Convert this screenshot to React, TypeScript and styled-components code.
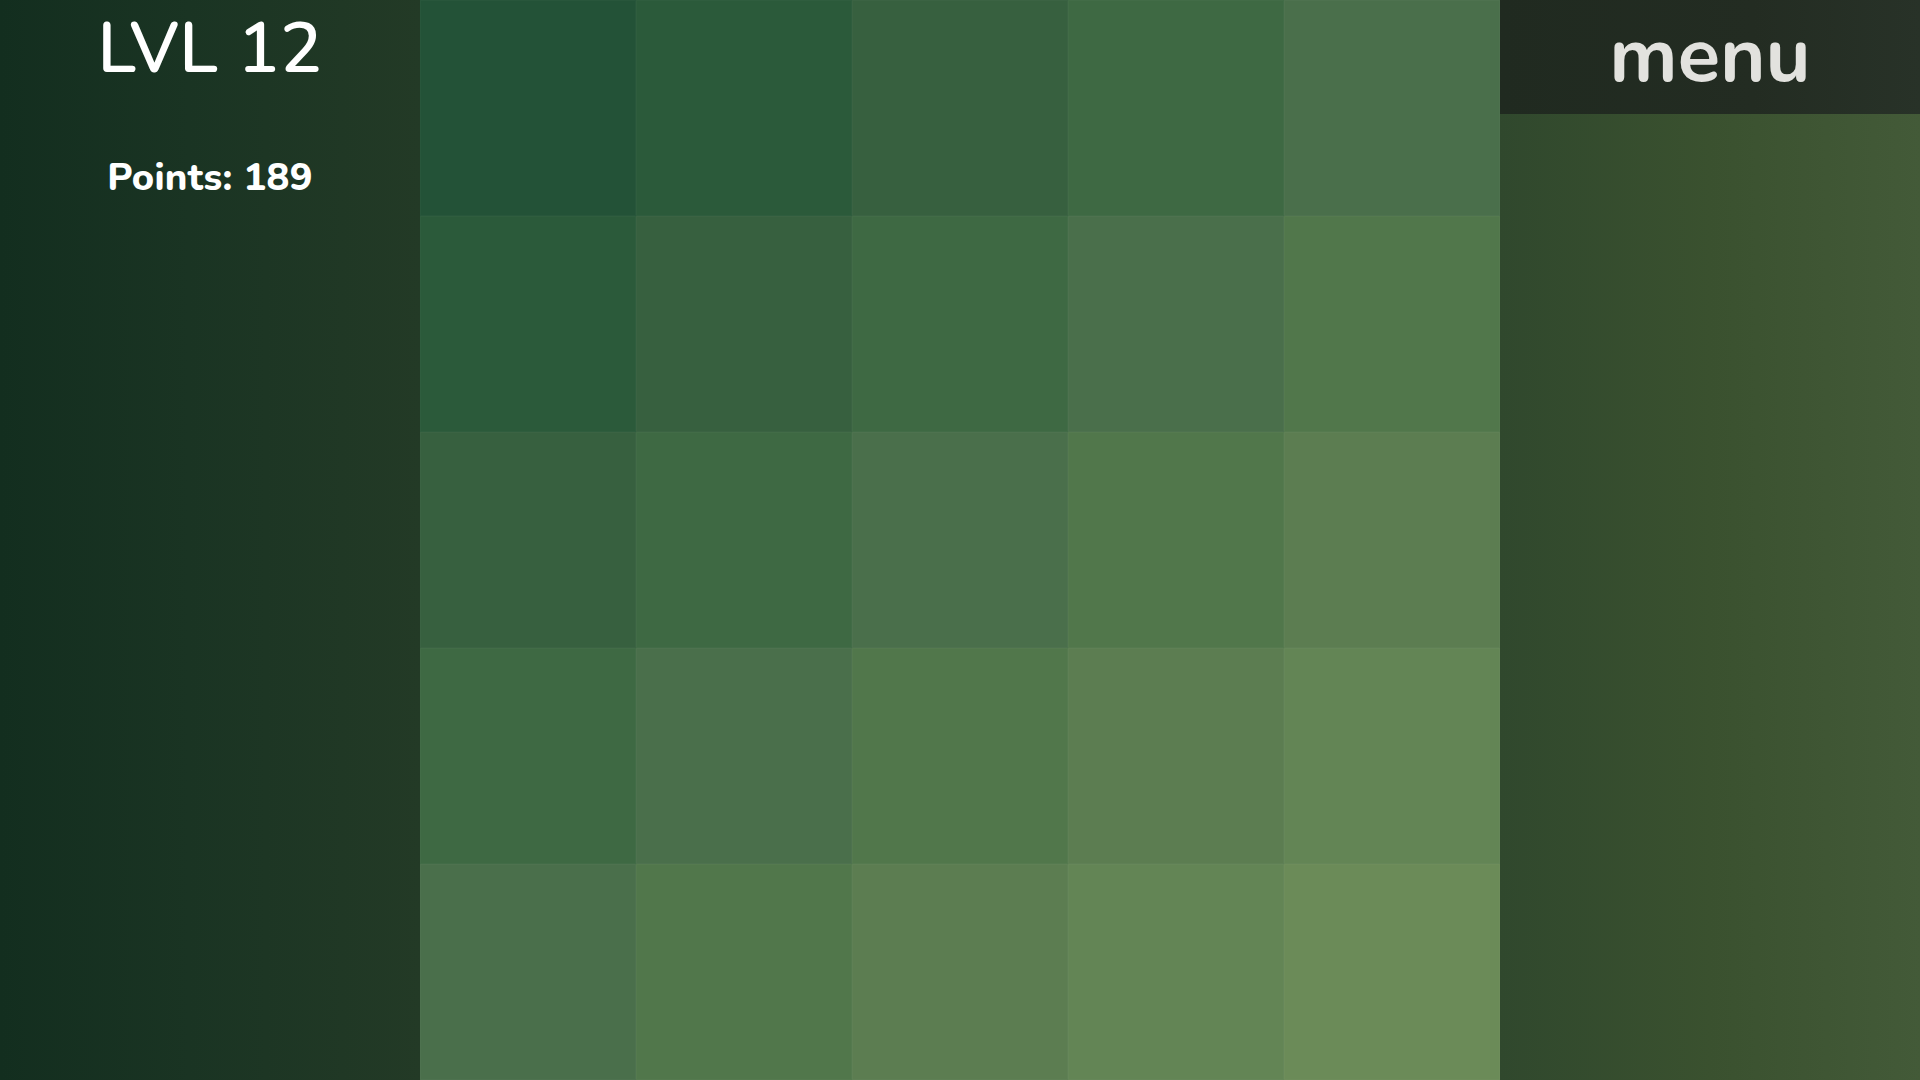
import React from 'react';
import styled, { createGlobalStyle } from 'styled-components';

const GlobalStyle = createGlobalStyle`
  html, body {
    margin: 0;
    padding: 0;
    background: #132e1f;
  }
  body {
    font-family: "Nunito", "Lato", "Open Sans", sans-serif;
    overflow: hidden;
  }
`;

const palette = [
  '#235237',
  '#2b5a3a',
  '#37603f',
  '#3e6943',
  '#4a6f4b',
  '#51774b',
  '#5c7d51',
  '#638555',
  '#6b8b58',
];

const Page = styled.div`
  display: grid;
  grid-template-columns: 420px 1080px 420px;
  height: 1080px;
  width: 1920px;
`;

const SidePanel = styled.aside`
  display: flex;
  flex-direction: column;
  align-items: center;
  background: linear-gradient(90deg, #132e1f 0%, #1a3423 45%, #233a26 100%);
  color: #fff;
`;

const Level = styled.h1`
  margin: 7px 0 0;
  font-size: 70px;
  font-weight: 600;
  line-height: 84px;
  letter-spacing: 0.5px;
`;

const Points = styled.p`
  margin: 64px 0 0;
  font-size: 38px;
  font-weight: 800;
  line-height: 46px;
  letter-spacing: 0.3px;
`;

const Board = styled.main`
  display: grid;
  grid-template-columns: repeat(5, 1fr);
  grid-template-rows: repeat(5, 1fr);
`;

const Cell = styled.div<{ $tone: string }>`
  background: ${(p) => p.$tone};
  box-shadow: inset 0 0 0 1px rgba(255, 255, 255, 0.025);
`;

const MenuPanel = styled.aside`
  display: flex;
  flex-direction: column;
  background: linear-gradient(90deg, #30482d 0%, #3a512f 50%, #435a38 100%);
`;

const MenuBar = styled.button`
  height: 114px;
  border: none;
  padding: 0 0 2px;
  background: linear-gradient(90deg, #202a20 0%, #232c22 60%, #283228 100%);
  color: #e2e2de;
  font-family: inherit;
  font-size: 78px;
  font-weight: 700;
  line-height: 1;
  letter-spacing: 0;
  cursor: pointer;
`;

const App = () => {
  const cells = [];
  for (let r = 0; r < 5; r++) {
    for (let c = 0; c < 5; c++) {
      cells.push(<Cell key={`${r}-${c}`} $tone={palette[r + c]} />);
    }
  }

  return (
    <>
      <GlobalStyle />
      <Page>
        <SidePanel>
          <Level>LVL 12</Level>
          <Points>Points: 189</Points>
        </SidePanel>
        <Board>{cells}</Board>
        <MenuPanel>
          <MenuBar>menu</MenuBar>
        </MenuPanel>
      </Page>
    </>
  );
};

export default App;
